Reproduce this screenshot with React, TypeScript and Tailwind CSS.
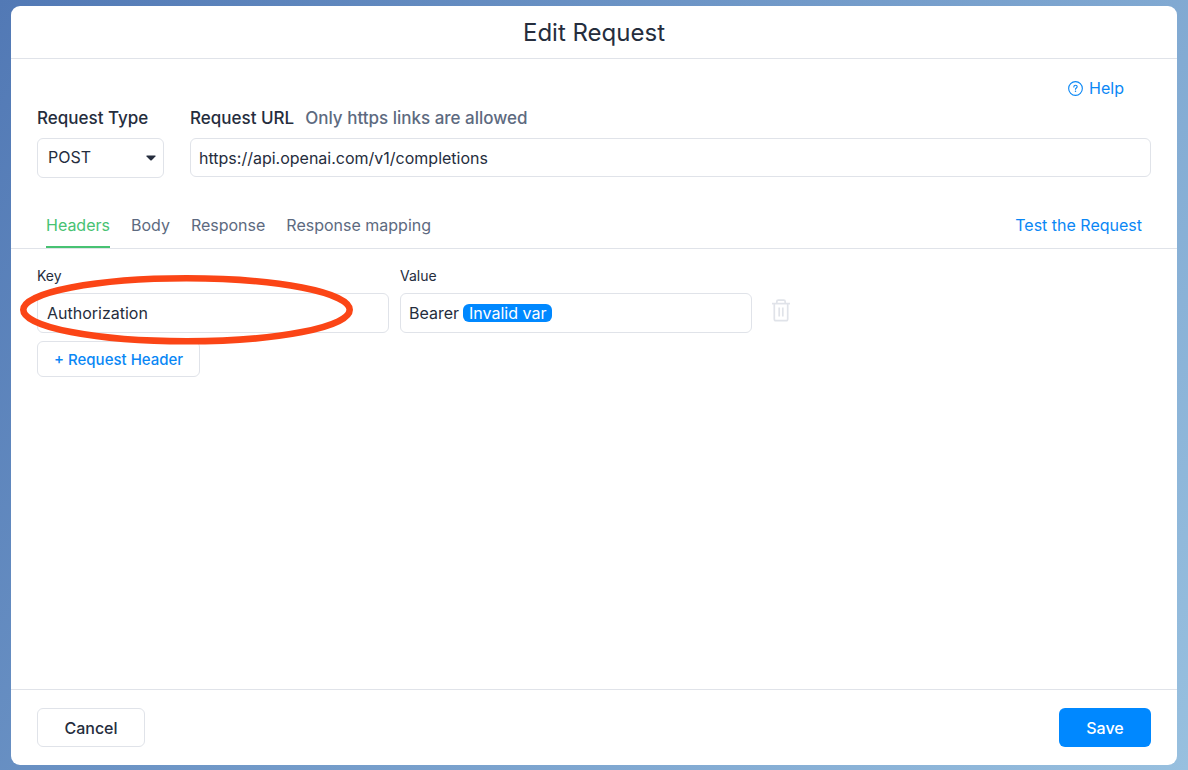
import { useState } from "react";

const tabs = ["Headers", "Body", "Response", "Response mapping"];

function HelpIcon() {
  return (
    <svg viewBox="0 0 16 16" className="size-[15px]" fill="none" stroke="currentColor" aria-hidden="true">
      <circle cx="8" cy="8" r="7.3" strokeWidth="1.2" />
      <path
        d="M6.2 6.300c0-1.100.8-1.800 1.800-1.800s1.800.7 1.800 1.600c0 1.300-1.800 1.300-1.800 2.600"
        strokeWidth="1.2"
        strokeLinecap="round"
      />
      <circle cx="8" cy="10.9" r="0.8" fill="currentColor" stroke="none" />
    </svg>
  );
}

function TrashIcon() {
  return (
    <svg viewBox="0 0 18 23" className="h-[23px] w-[18px]" fill="none" stroke="currentColor" strokeWidth="1.7" aria-hidden="true">
      <path d="M0 4.600h18" />
      <path d="M4.800 4.200V2.700C4.800 1.800 5.400 1.200 6.300 1.200h5.400c.9 0 1.500.6 1.500 1.500v1.500" />
      <path d="M2.300 4.500v15.500c0 1 .6 1.700 1.600 1.700h10.200c1 0 1.600-.7 1.600-1.700V4.500" />
      <path d="M7.200 8.500v9M10.800 8.500v9" />
    </svg>
  );
}

export default function App() {
  const [active, setActive] = useState("Headers");
  const [url, setUrl] = useState("https://api.openai.com/v1/completions");
  const [key, setKey] = useState("Authorization");

  return (
    <div className="flex min-h-screen flex-col bg-linear-125 from-[#5279b5] to-[#98c0df] px-[11px] pt-1.5 pb-[5px] font-['Inter',sans-serif] text-base text-[#252d3d]">
      <main role="dialog" aria-labelledby="dialog-title" className="flex flex-1 flex-col rounded-[9px] bg-white">
        <header className="border-b border-[#e0e3e9] pt-[11px] pb-[9px] text-center">
          <h1 id="dialog-title" className="text-2xl leading-8">
            Edit Request
          </h1>
        </header>

        <section className="flex flex-1 flex-col">
          <div className="flex justify-end px-[53px] pt-[17px]">
            <a href="#help" className="flex items-center gap-1.5 leading-6 text-[#0a87f5]">
              <HelpIcon />
              Help
            </a>
          </div>

          <div className="flex gap-[26px] px-[26px] pt-1.5">
            <div className="flex w-[127px] flex-col gap-2">
              <label htmlFor="type" className="text-[17px] leading-6 font-medium">
                Request Type
              </label>
              <div className="relative">
                <select
                  id="type"
                  defaultValue="POST"
                  className="h-10 w-full appearance-none rounded-md border border-[#e0e3e9] bg-white px-2.5 pb-0.5"
                >
                  <option>POST</option>
                  <option>GET</option>
                  <option>PUT</option>
                </select>
                <svg viewBox="0 0 10 6" className="pointer-events-none absolute top-[17px] right-2 h-1.5 w-2.5" fill="currentColor" aria-hidden="true">
                  <path d="M1 0.500h8c.5 0 .7.500.4.9L5.700 5.200c-.4.400-1 .4-1.400 0L.6 1.400C.3 1 .5.500 1 .5z" />
                </svg>
              </div>
            </div>
            <div className="flex flex-1 flex-col gap-2">
              <div className="flex gap-[11px] text-[17px] leading-6 font-medium">
                <label htmlFor="url">Request URL</label>
                <span className="text-[#5d6a80]">Only https links are allowed</span>
              </div>
              <input
                id="url"
                value={url}
                onChange={(e) => setUrl(e.target.value)}
                className="h-[39px] w-full rounded-md border border-[#e0e3e9] px-2"
              />
            </div>
          </div>

          <div className="mt-6 flex justify-between border-b border-[#e0e3e9] px-[35px]">
            <div role="tablist" className="flex gap-[21px]">
              {tabs.map((tab) => (
                <button
                  key={tab}
                  type="button"
                  role="tab"
                  aria-selected={active === tab}
                  onClick={() => setActive(tab)}
                  className={
                    active === tab
                      ? "border-b-2 border-[#47c272] pt-[11px] pb-[9px] leading-6 text-[#47c272]"
                      : "border-b-2 border-transparent pt-[11px] pb-[9px] leading-6 text-[#5d6a80]"
                  }
                >
                  {tab}
                </button>
              ))}
            </div>
            <button type="button" className="pt-[11px] pb-[11px] leading-6 text-[#0a87f5]">
              Test the Request
            </button>
          </div>

          <div className="px-[26px] pt-[17px]">
            <div className="flex items-end gap-[11px]">
              <div className="relative flex w-[352px] flex-col gap-[7px]">
                <label htmlFor="key" className="text-sm leading-5">
                  Key
                </label>
                <input
                  id="key"
                  value={key}
                  onChange={(e) => setKey(e.target.value)}
                  className="h-10 w-full rounded-md border border-[#e0e3e9] px-[9px]"
                />
                <svg
                  viewBox="0 0 334 70"
                  className="pointer-events-none absolute top-[9px] -left-[17px] z-10 h-[70px] w-[334px]"
                  fill="none"
                  aria-hidden="true"
                >
                  <ellipse cx="166.500" cy="34.800" rx="163.200" ry="31.500" stroke="#fb4516" strokeWidth="6.600" />
                </svg>
              </div>
              <div className="flex w-[352px] flex-col gap-[7px]">
                <span id="value-label" className="text-sm leading-5">
                  Value
                </span>
                <div
                  role="textbox"
                  aria-labelledby="value-label"
                  contentEditable
                  suppressContentEditableWarning
                  className="flex h-10 items-center gap-1 rounded-md border border-[#e0e3e9] px-2"
                >
                  <span>Bearer</span>
                  <span className="rounded-md bg-[#0088ff] px-1.5 leading-[18px] text-white">Invalid var</span>
                </div>
              </div>
              <button type="button" aria-label="Delete header" className="mb-[11px] ml-[9px] text-[#e0e3e9]">
                <TrashIcon />
              </button>
            </div>
            <button
              type="button"
              className="mt-2 h-9 rounded-md border border-[#e0e3e9] px-4 pt-0.5 text-[15px] font-medium text-[#0a87f5]"
            >
              + Request Header
            </button>
          </div>
        </section>

        <footer className="flex justify-between border-t border-[#e0e3e9] px-[26px] py-[18px]">
          <button type="button" className="h-[39px] w-[108px] rounded-md border border-[#e0e3e9] font-medium">
            Cancel
          </button>
          <button type="button" className="h-[39px] w-[92px] rounded-md bg-[#0088ff] font-medium text-white">
            Save
          </button>
        </footer>
      </main>
    </div>
  );
}
